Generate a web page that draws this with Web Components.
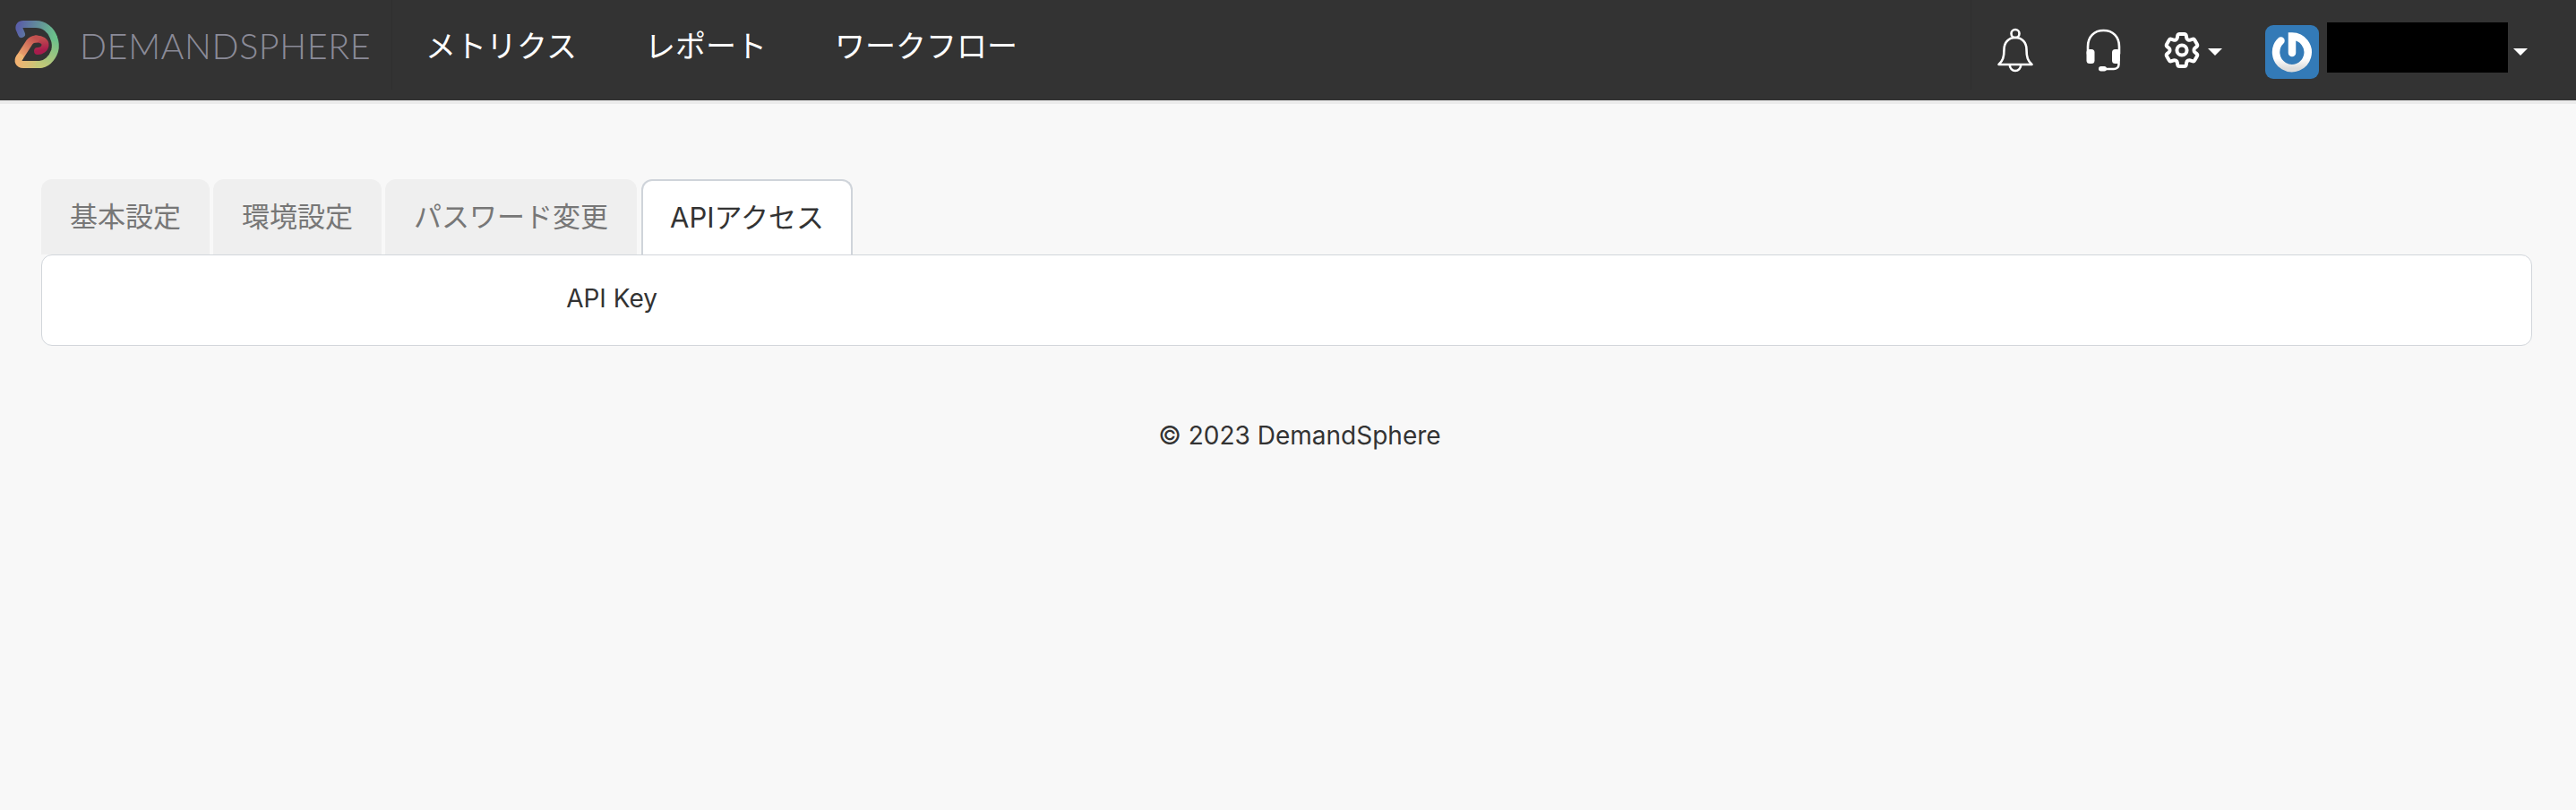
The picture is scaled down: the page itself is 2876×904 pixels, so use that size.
<!DOCTYPE html>
<html lang="ja">
<head>
<meta charset="utf-8">
<title>DemandSphere</title>
<style>
    html, body {
        margin: 0;
        height: 100%;
        background-color: #f8f8f8;
        font-family: Inter, "Noto Sans CJK JP", sans-serif;
    }
</style>
</head>
<body>
<ds-header>
    <ds-nav-link>メトリクス</ds-nav-link>
    <ds-nav-link>レポート</ds-nav-link>
    <ds-nav-link>ワークフロー</ds-nav-link>
</ds-header>
<ds-tabs>
    <ds-tab>基本設定</ds-tab>
    <ds-tab>環境設定</ds-tab>
    <ds-tab>パスワード変更</ds-tab>
    <ds-tab active>APIアクセス</ds-tab>
</ds-tabs>
<ds-panel label="API Key"></ds-panel>
<ds-footer>© 2023 DemandSphere</ds-footer>

<script>
class DsLogo extends HTMLElement {
    constructor() {
        super();
        this.attachShadow({ mode: 'open' });
    }

    connectedCallback() {
        this.shadowRoot.innerHTML = `
            <style>
                :host {
                    display: flex;
                    align-items: center;
                    box-sizing: border-box;
                    width: 438px;
                    height: 100px;
                    margin-bottom: 12px;
                    padding-left: 10px;
                    border-right: 1px solid #2f2f2f;
                }
                svg { display: block; }
                span {
                    margin-left: 15px;
                    margin-top: 0;
                    font: 300 39.5px Lato, sans-serif;
                    letter-spacing: 0.6px;
                    color: #8b8b98;
                }
            </style>
            <svg width="64" height="66" viewBox="10 20 64 66" fill="none" stroke-width="8" stroke-linecap="round" stroke-linejoin="round">
                <defs>
                    <linearGradient id="a" gradientUnits="userSpaceOnUse" x1="21" y1="32" x2="60" y2="45">
                        <stop offset="0" stop-color="#5a60a8"/>
                        <stop offset="1" stop-color="#6bc08b"/>
                    </linearGradient>
                    <linearGradient id="b" gradientUnits="userSpaceOnUse" x1="60" y1="45" x2="44" y2="75">
                        <stop offset="0" stop-color="#6bc08b"/>
                        <stop offset="1" stop-color="#c3c878"/>
                    </linearGradient>
                    <linearGradient id="c" gradientUnits="userSpaceOnUse" x1="44" y1="75" x2="20" y2="70">
                        <stop offset="0" stop-color="#c3c878"/>
                        <stop offset="1" stop-color="#f2b272"/>
                    </linearGradient>
                    <linearGradient id="d" gradientUnits="userSpaceOnUse" x1="21" y1="68" x2="40" y2="46">
                        <stop offset="0" stop-color="#f2b272"/>
                        <stop offset="1" stop-color="#c2504f"/>
                    </linearGradient>
                    <linearGradient id="e" gradientUnits="userSpaceOnUse" x1="40" y1="46" x2="42" y2="60">
                        <stop offset="0" stop-color="#c2504f"/>
                        <stop offset="1" stop-color="#a81c4c"/>
                    </linearGradient>
                </defs>
                <path stroke="url(#e)" d="M40 46.5C46 46 51 49.5 50.500 53.500C50 57.500 46 60 42 60"/>
                <path stroke="url(#d)" d="M22 67L33 50C35 47.500 37 46.700 40 46.500"/>
                <path stroke="url(#c)" d="M44 75H26C21 75 19 71 22 67"/>
                <path stroke="url(#b)" d="M60 45C62 50 62.500 55 61 60C58 69 51 75 44 75"/>
                <path stroke="url(#a)" d="M24 41L21.500 35C21 32 22.500 30 26 30H40C49 30 57 36 60 45"/>
            </svg>
            <span>DEMANDSPHERE</span>
        `;
    }
}
customElements.define('ds-logo', DsLogo);

class DsHeader extends HTMLElement {
    constructor() {
        super();
        this.attachShadow({ mode: 'open' });
    }

    connectedCallback() {
        this.shadowRoot.innerHTML = `
            <style>
                :host {
                    display: flex;
                    align-items: center;
                    height: 112px;
                    background-color: #333;
                    border-bottom: 4px solid #ebebeb;
                }
                nav {
                    display: flex;
                    gap: 76px;
                    padding-left: 37px;
                    margin-bottom: 8px;
                }
                .right {
                    display: flex;
                    align-items: center;
                    box-sizing: border-box;
                    height: 100px;
                    margin-left: auto;
                    margin-bottom: 12px;
                    padding-right: 54px;
                    padding-left: 25px;
                    border-left: 1px solid #2f2f2f;
                }
                svg { display: block; margin-top: 12px; }
                .caret {
                    width: 0;
                    height: 0;
                    margin-top: 16px;
                    border-top: 8px solid #fff;
                    border-left: 8px solid transparent;
                    border-right: 8px solid transparent;
                }
                .avatar {
                    width: 60px;
                    height: 60px;
                    margin: 16px 0 0 48px;
                    background-color: #337ab7;
                    border-radius: 9px;
                }
                .avatar svg { margin: 0; }
                .redacted {
                    width: 202px;
                    height: 56px;
                    margin: 6px 6px 0 9px;
                    background-color: #000;
                }
            </style>
            <ds-logo></ds-logo>
            <nav><slot></slot></nav>
            <div class="right">
                <svg width="48" height="56" viewBox="0 0 48 56" fill="none" stroke="#fff" stroke-width="2.6" stroke-linejoin="round">
                    <circle cx="24" cy="9.500" r="4.500"/>
                    <path d="M24 14C16 14 11.500 20 11.500 27C11.500 36 10 40 5.500 44H42.500C38 40 36.500 36 36.500 27C36.500 20 32 14 24 14Z"/>
                    <path d="M17.800 44.500a6.200 6.500 0 0 0 12.400 0"/>
                </svg>
                <svg style="margin-left:50px" width="48" height="56" viewBox="0 0 48 56" fill="none" stroke="#fff" stroke-width="2.600" stroke-linecap="round">
                    <path d="M7 32V24C7 13 14 6 24.500 6S42 13 42 24V32"/>
                    <rect x="5.500" y="27" width="9" height="16" rx="3.500" fill="#fff" stroke="none"/>
                    <rect x="34" y="27" width="9" height="16" rx="3.500" fill="#fff" stroke="none"/>
                    <path d="M41.500 42V44C41.500 47 39 49 36 49H26"/>
                    <rect x="19" y="46" width="9" height="5.500" rx="2.700" fill="#fff" stroke="none"/>
                </svg>
                <svg style="margin-left:40px" width="48" height="56" viewBox="0 -2 24 28" fill="none" stroke="#fff" stroke-width="2" stroke-linejoin="round">
                    <path d="M9.594 3.940c.09-.542.56-.94 1.110-.94h2.593c.55 0 1.020.398 1.110.94l.213 1.281c.063.374.313.686.645.870.074.040.147.083.220.127.325.196.720.257 1.075.124l1.217-.456a1.125 1.125 0 0 1 1.370.490l1.296 2.247a1.125 1.125 0 0 1-.260 1.431l-1.003.827c-.293.241-.438.613-.430.992a7.723 7.723 0 0 1 0 .255c-.008.378.137.750.430.991l1.004.827c.424.350.534.955.260 1.430l-1.298 2.247a1.125 1.125 0 0 1-1.369.491l-1.217-.456c-.355-.133-.750-.072-1.076.124a6.470 6.470 0 0 1-.220.128c-.331.183-.581.495-.644.869l-.213 1.281c-.09.543-.56.940-1.110.940h-2.594c-.55 0-1.019-.398-1.110-.940l-.213-1.281c-.062-.374-.312-.686-.644-.870a6.520 6.520 0 0 1-.220-.127c-.325-.196-.720-.257-1.076-.124l-1.217.456a1.125 1.125 0 0 1-1.369-.490l-1.297-2.247a1.125 1.125 0 0 1 .260-1.431l1.004-.827c.292-.240.437-.613.430-.991a6.932 6.932 0 0 1 0-.255c.007-.380-.138-.751-.430-.992l-1.004-.827a1.125 1.125 0 0 1-.260-1.430l1.297-2.247a1.125 1.125 0 0 1 1.370-.491l1.216.456c.356.133.751.072 1.076-.124.072-.044.146-.086.220-.128.332-.183.582-.495.644-.869l.214-1.280Z"/>
                    <circle cx="12" cy="12" r="2.800"/>
                </svg>
                <div class="caret" style="margin-left:5px"></div>
                <div class="avatar">
                    <svg width="60" height="60" viewBox="0 0 60 60" fill="none" stroke-width="8.500" stroke-linecap="round">
                        <defs>
                            <linearGradient id="ring" x1="0" y1="0" x2="0" y2="1">
                                <stop offset="0.700" stop-color="#fff"/>
                                <stop offset="1" stop-color="#dcdcdc"/>
                            </linearGradient>
                        </defs>
                        <path stroke="url(#ring)" d="M30 31V12.500A17.800 17.800 0 1 1 17.500 17.500"/>
                    </svg>
                </div>
                <div class="redacted"></div>
                <div class="caret"></div>
            </div>
        `;
    }
}
customElements.define('ds-header', DsHeader);

class DsNavLink extends HTMLElement {
    constructor() {
        super();
        this.attachShadow({ mode: 'open' });
    }

    connectedCallback() {
        this.shadowRoot.innerHTML = `
            <style>
                :host {
                    display: block;
                    color: #fff;
                    font-size: 34px;
                    line-height: 48px;
                }
            </style>
            <slot></slot>
        `;
    }
}
customElements.define('ds-nav-link', DsNavLink);

class DsTabs extends HTMLElement {
    constructor() {
        super();
        this.attachShadow({ mode: 'open' });
    }

    connectedCallback() {
        this.shadowRoot.innerHTML = `
            <style>
                :host {
                    display: flex;
                    gap: 4px;
                    padding: 84px 0 0 46px;
                }
            </style>
            <slot></slot>
        `;
    }
}
customElements.define('ds-tabs', DsTabs);

class DsTab extends HTMLElement {
    constructor() {
        super();
        this.attachShadow({ mode: 'open' });
    }

    connectedCallback() {
        this.shadowRoot.innerHTML = `
            <style>
                :host {
                    display: block;
                    box-sizing: border-box;
                    height: 84px;
                    padding: 0 32px;
                    background-color: #efefef;
                    color: #777;
                    font-size: 31px;
                    line-height: 84px;
                    border-radius: 12px 12px 0 0;
                }
                :host([active]) {
                    margin-left: 1px;
                    padding: 0 30px;
                    background-color: #fff;
                    color: #333;
                    line-height: 82px;
                    border: 2px solid #cfd4da;
                    border-bottom: none;
                }
            </style>
            <slot></slot>
        `;
    }
}
customElements.define('ds-tab', DsTab);

class DsPanel extends HTMLElement {
    constructor() {
        super();
        this.attachShadow({ mode: 'open' });
    }

    connectedCallback() {
        const label = this.getAttribute('label');

        this.shadowRoot.innerHTML = `
            <style>
                :host {
                    display: grid;
                    grid-template-columns: 687px 1fr;
                    box-sizing: border-box;
                    height: 102px;
                    margin: 0 49px 0 46px;
                    background-color: #fff;
                    border: 1.500px solid #d2d6db;
                    border-radius: 12px;
                }
                label {
                    padding-top: 30px;
                    color: #333;
                    font-size: 28px;
                    line-height: 36px;
                    text-align: right;
                }
            </style>
            <label>${label}</label>
            <div></div>
        `;
    }
}
customElements.define('ds-panel', DsPanel);

class DsFooter extends HTMLElement {
    constructor() {
        super();
        this.attachShadow({ mode: 'open' });
    }

    connectedCallback() {
        this.shadowRoot.innerHTML = `
            <style>
                :host {
                    display: block;
                    padding: 82px 0 0 26px;
                    color: #333;
                    font-size: 28px;
                    line-height: 36px;
                    text-align: center;
                }
            </style>
            <slot></slot>
        `;
    }
}
customElements.define('ds-footer', DsFooter);
</script>
</body>
</html>
